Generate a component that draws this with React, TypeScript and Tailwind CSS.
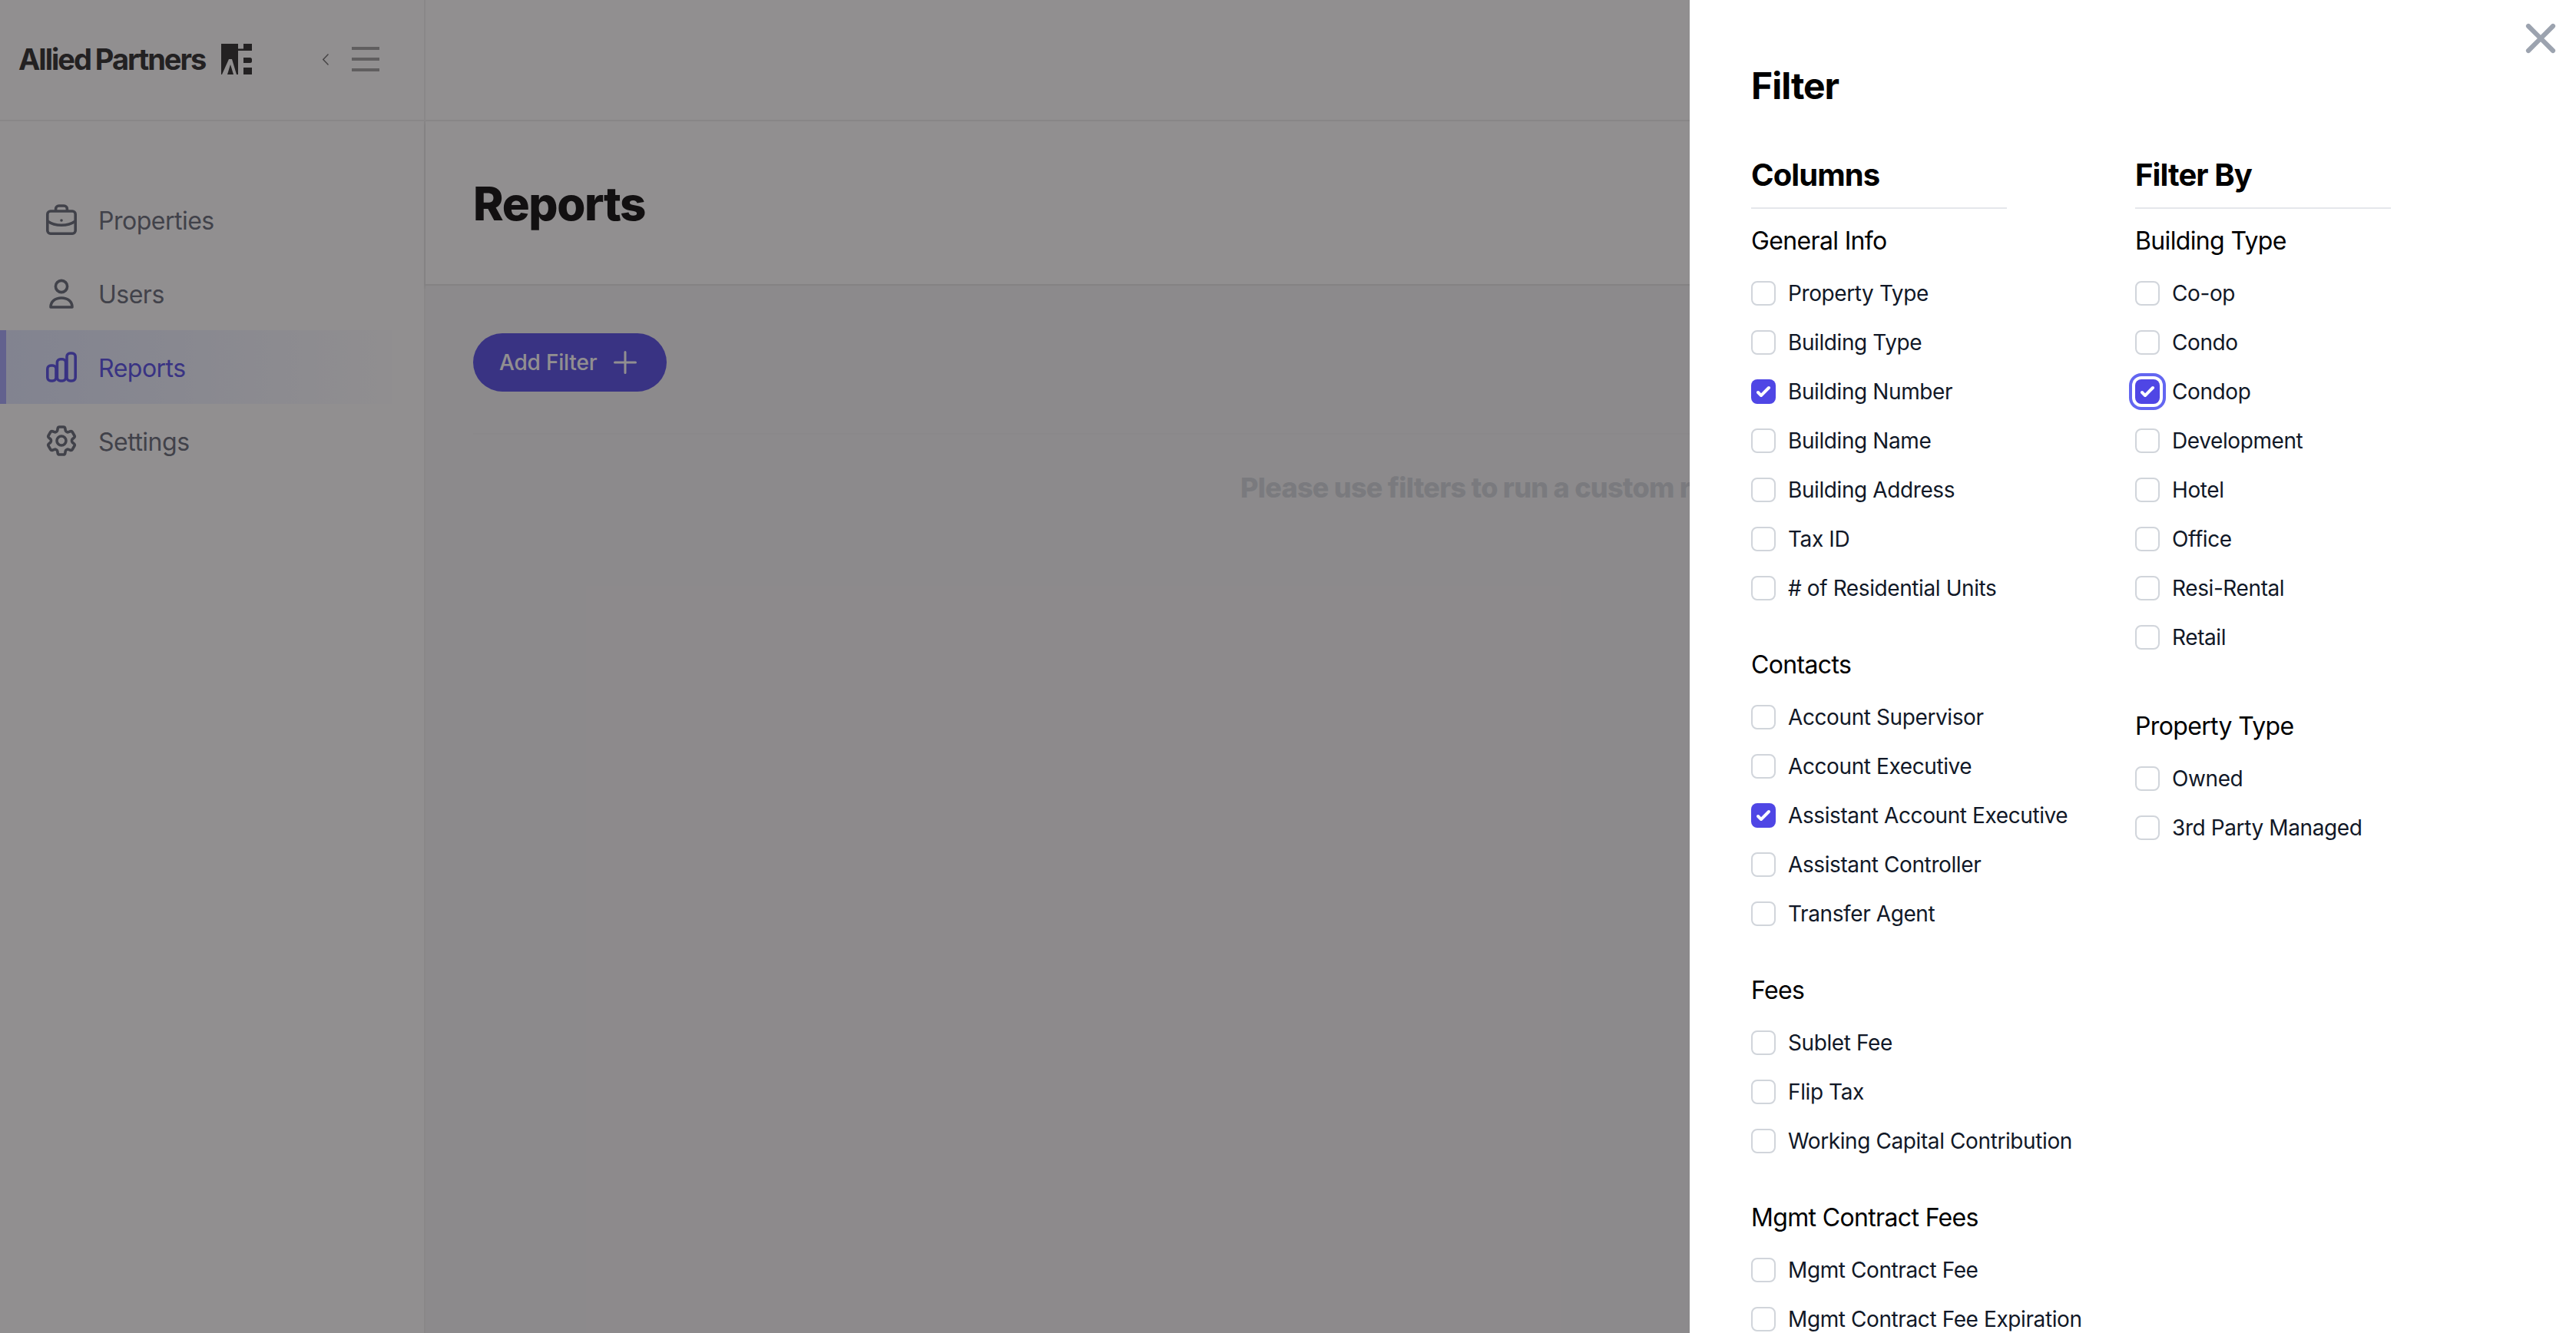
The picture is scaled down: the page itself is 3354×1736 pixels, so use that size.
const FONT = "font-['Inter','Liberation_Sans',sans-serif]";

function Check() {
  return (
    <svg viewBox="0 0 16 16" className="w-full h-full" fill="#ffffff">
      <path d="M12.207 4.793a1 1 0 0 1 0 1.414l-5 5a1 1 0 0 1-1.414 0l-2-2a1 1 0 0 1 1.414-1.414L6.5 9.086l4.293-4.293a1 1 0 0 1 1.414 0z" />
    </svg>
  );
}

function Row({ label, state }: { label: string; state?: "on" | "focus" }) {
  const box =
    state === "focus"
      ? "bg-[#4f46e5] shadow-[0_0_0_4px_#ffffff,0_0_0_8px_#6366f1]"
      : state === "on"
      ? "bg-[#4f46e5]"
      : "border-2 border-[#d1d5db] bg-white";
  return (
    <div className="flex items-center h-10">
      <span className={`w-8 h-8 rounded-lg shrink-0 ${box}`}>{state ? <Check /> : null}</span>
      <span className="ml-4 text-[28px] leading-10 tracking-[-0.4px] text-[#111827] whitespace-nowrap">{label}</span>
    </div>
  );
}

function Group({ title, items, on = [], focus = [] }: { title: string; items: string[]; on?: string[]; focus?: string[] }) {
  return (
    <div>
      <h4 className="text-[32px] leading-[48px] tracking-[-0.65px] text-black mb-6">{title}</h4>
      <div className="flex flex-col gap-6">
        {items.map((i) => (
          <Row key={i} label={i} state={focus.includes(i) ? "focus" : on.includes(i) ? "on" : undefined} />
        ))}
      </div>
    </div>
  );
}

function Heading({ children }: { children: string }) {
  return (
    <h3 className="text-[40px] leading-[56px] tracking-[-0.9px] font-bold text-black pt-0.5 pb-3.5 border-b-2 border-[#e5e7eb] mb-[18px]">
      {children}
    </h3>
  );
}

function NavItem({ label, active, icon }: { label: string; active?: boolean; icon: React.ReactNode }) {
  return (
    <div
      className={
        "h-24 flex items-center text-[32px] tracking-[-0.5px] " +
        (active
          ? "w-[510px] border-l-8 border-[#a0a3fa] pl-[52px] bg-gradient-to-r from-[#e0e7ff] to-[#fdfdff] text-[#4f46e5]"
          : "pl-[60px] text-[#5f6573]")
      }
    >
      {icon}
      <span className="ml-7 pt-1">{label}</span>
    </div>
  );
}

const iconCls = "w-10 h-10 shrink-0";

export default function App() {
  return (
    <div className={`relative h-[1736px] w-[3354px] overflow-hidden bg-white ${FONT}`}>
      {/* Underlying page */}
      <div className="flex h-full">
        <aside className="w-[554px] shrink-0 border-r-2 border-[#eeeeee] bg-white">
          <div className="h-[158px] border-b-2 border-[#eeeeee] flex items-center pl-6 pb-0.5">
            <div className="flex items-center w-[264px] text-[#222222] font-bold text-[38px] leading-none tracking-[-2px] whitespace-nowrap">
              <span>Allied</span>
              <span className="ml-[6px]">Partners</span>
            </div>
            <svg viewBox="0 0 40 40" className="w-10 h-10 shrink-0" fill="#222222">
              <path d="M0 0H22V6.5H29V0H40V9H22V40H20L14 20H10L1 40H0Z" />
              <path d="M12 27L8 40H16Z" />
              <path d="M29 18H37.5Q40 18 40 20.5V22.5Q40 25 37.5 25H29Z" />
              <path d="M29 31H40V40H29Z" />
            </svg>
            <svg viewBox="0 0 8 15" className="w-2 h-[15px] ml-[92px]" fill="none" stroke="#666666" strokeWidth="1.4">
              <path d="M7.5 0.5L0.8 7.5L7.5 14.5" />
            </svg>
            <div className="ml-[30px] w-9 flex flex-col gap-2.5">
              <span className="h-1 bg-[#9c9c9c]" />
              <span className="h-1 bg-[#9c9c9c]" />
              <span className="h-1 bg-[#9c9c9c]" />
            </div>
          </div>
          <nav className="pt-[80px]">
            <NavItem
              label="Properties"
              icon={
                <svg viewBox="0 0 20 20" className={iconCls} fill="none" stroke="currentColor" strokeWidth="1.8" strokeLinejoin="round">
                  <path d="M6.3 4.5V3a2 2 0 0 1 2-2h3.4a2 2 0 0 1 2 2v1.5" />
                  <rect x="0.9" y="4.5" width="18.2" height="14.6" rx="2" />
                  <path d="M0.9 11C6 14.5 14 14.5 19.1 11" />
                  <circle cx="10" cy="10.5" r="0.9" fill="currentColor" stroke="none" />
                </svg>
              }
            />
            <NavItem
              label="Users"
              icon={
                <svg viewBox="0 0 20 20" className={iconCls} fill="none" stroke="currentColor" strokeWidth="1.8" strokeLinejoin="round">
                  <circle cx="10" cy="5.5" r="3.8" />
                  <path d="M3 19c0-3.7 3-6 7-6s7 2.3 7 6z" />
                </svg>
              }
            />
            <NavItem
              active
              label="Reports"
              icon={
                <svg viewBox="0 0 20 20" className={iconCls} fill="none" stroke="currentColor" strokeWidth="1.8" strokeLinejoin="round">
                  <rect x="0.9" y="9" width="5.6" height="10" rx="2.2" />
                  <rect x="7.2" y="4.9" width="5.6" height="14.1" rx="2.2" />
                  <rect x="13.5" y="1" width="5.6" height="18" rx="2.2" />
                </svg>
              }
            />
            <NavItem
              label="Settings"
              icon={
                <svg viewBox="2.2 2 19.6 20" className={iconCls} fill="none" stroke="currentColor" strokeWidth="1.8" strokeLinejoin="round">
                  <path d="M9.594 3.94c.09-.542.56-.94 1.11-.94h2.593c.55 0 1.02.398 1.11.94l.213 1.281c.063.374.313.686.645.87.074.04.147.083.22.127.325.196.72.257 1.075.124l1.217-.456a1.125 1.125 0 0 1 1.37.49l1.296 2.247a1.125 1.125 0 0 1-.26 1.431l-1.003.827c-.293.241-.438.613-.43.992a7.723 7.723 0 0 1 0 .255c-.008.378.137.75.43.991l1.004.827c.424.35.534.955.26 1.43l-1.298 2.247a1.125 1.125 0 0 1-1.369.491l-1.217-.456c-.355-.133-.75-.072-1.076.124a6.47 6.47 0 0 1-.22.128c-.331.183-.581.495-.644.869l-.213 1.281c-.09.543-.56.94-1.11.94h-2.594c-.55 0-1.019-.398-1.11-.94l-.213-1.281c-.062-.374-.312-.686-.644-.87a6.52 6.52 0 0 1-.22-.127c-.325-.196-.72-.257-1.076-.124l-1.217.456a1.125 1.125 0 0 1-1.369-.49l-1.297-2.247a1.125 1.125 0 0 1 .26-1.431l1.004-.827c.292-.24.437-.613.43-.991a6.932 6.932 0 0 1 0-.255c.007-.38-.138-.751-.43-.992l-1.004-.827a1.125 1.125 0 0 1-.26-1.43l1.297-2.247a1.125 1.125 0 0 1 1.37-.491l1.216.456c.356.133.751.072 1.076-.124.072-.044.146-.086.22-.128.332-.183.582-.495.644-.869l.214-1.28Z" />
                  <path d="M15 12a3 3 0 1 1-6 0 3 3 0 0 1 6 0Z" />
                </svg>
              }
            />
          </nav>
        </aside>
        <main className="flex-1 min-w-0 flex flex-col">
          <div className="h-[158px] border-b-2 border-[#eeeeee] shrink-0" />
          <div className="h-[214px] shrink-0 pl-[62px] pt-0.5 flex items-center shadow-[0_2px_4px_rgba(0,0,0,0.12)] border-b-2 border-[#e5e5e5]">
            <h1 className="text-[60px] tracking-[-1.4px] font-extrabold text-black">Reports</h1>
          </div>
          <div className="flex-1 bg-[#f5f5f6] px-[62px] pt-[62px]">
            <button className="h-[76px] w-[252px] rounded-full bg-[#4f46e5] text-white text-[28px] tracking-[-0.2px] font-medium flex items-center pl-[34px]">
              Add Filter
              <svg viewBox="0 0 30 30" className="w-[30px] h-[30px] ml-[22px]" stroke="#ffffff" strokeWidth="3" strokeLinecap="round">
                <path d="M15 1.5V28.5M1.5 15H28.5" />
              </svg>
            </button>
            <div className="mt-[54px] border-t-2 border-[#f1f1f2] pt-[42px] text-center">
              <span className="text-[36px] tracking-[-0.75px] font-extrabold text-[#d1d5db] whitespace-nowrap">Please use filters to run a custom report</span>
            </div>
          </div>
        </main>
      </div>

      {/* Overlay */}
      <div className="absolute inset-0 bg-[#241f21]/50" />

      {/* Filter panel */}
      <div className="absolute inset-y-0 right-0 w-[1154px] bg-white pl-20 overflow-hidden">
        <svg viewBox="0 0 24 24" className="absolute left-[1076px] top-[18px] w-16 h-16" fill="none" stroke="#9ca3af" strokeWidth="2.3" strokeLinecap="round">
          <path d="M6 18 18 6M6 6l12 12" />
        </svg>
        <h2 className="mt-[80px] text-[48px] leading-[64px] tracking-[-1px] font-bold text-black">Filter</h2>
        <div className="mt-[54px] flex gap-[167px]">
          <div className="w-[333px] shrink-0">
            <Heading>Columns</Heading>
            <div className="flex flex-col gap-14">
              <Group
                title="General Info"
                on={["Building Number"]}
                items={["Property Type", "Building Type", "Building Number", "Building Name", "Building Address", "Tax ID", "# of Residential Units"]}
              />
              <Group
                title="Contacts"
                on={["Assistant Account Executive"]}
                items={["Account Supervisor", "Account Executive", "Assistant Account Executive", "Assistant Controller", "Transfer Agent"]}
              />
              <Group title="Fees" items={["Sublet Fee", "Flip Tax", "Working Capital Contribution"]} />
              <Group title="Mgmt Contract Fees" items={["Mgmt Contract Fee", "Mgmt Contract Fee Expiration"]} />
            </div>
          </div>
          <div className="w-[333px] shrink-0">
            <Heading>Filter By</Heading>
            <div className="flex flex-col gap-[72px]">
              <Group
                title="Building Type"
                focus={["Condop"]}
                items={["Co-op", "Condo", "Condop", "Development", "Hotel", "Office", "Resi-Rental", "Retail"]}
              />
              <Group title="Property Type" items={["Owned", "3rd Party Managed"]} />
            </div>
          </div>
        </div>
      </div>
    </div>
  );
}
